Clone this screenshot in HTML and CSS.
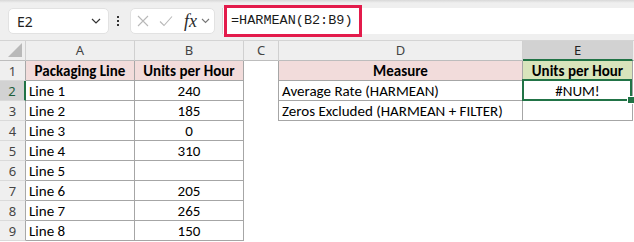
FILE: index.html
```
<!DOCTYPE html>
<html lang="en">
<head>
    <meta charset="UTF-8">
    <title>HARMEAN sheet</title>
    <link rel="stylesheet" href="styles.css">
</head>
<body>
    <div class="toolbar">
        <div class="namebox">
            <span>E2</span>
            <svg class="chev" width="10" height="6" viewBox="0 0 10 6"><path d="M1 1l4 4 4-4" fill="none" stroke="#333" stroke-width="1.2"/></svg>
        </div>
        <div class="dots"><i></i><i></i><i></i></div>
        <div class="fxbox">
            <svg width="12" height="12" viewBox="0 0 12 12"><path d="M1 1l10 10M11 1L1 11" stroke="#b8b8b8" stroke-width="1.1"/></svg>
            <svg width="14" height="12" viewBox="0 0 14 12"><path d="M1 6.5l4 4L13 1.5" fill="none" stroke="#b8b8b8" stroke-width="1.1"/></svg>
            <span class="fx">fx</span>
            <svg class="chev" width="9" height="6" viewBox="0 0 9 6"><path d="M1 1l3.5 3.5L8 1" fill="none" stroke="#777" stroke-width="1.1"/></svg>
        </div>
        <div class="formula">
            <span>=HARMEAN(B2:B9)</span>
            <div class="mark"></div>
        </div>
    </div>

    <div class="sheet">
        <div class="corner"></div>
        <div class="hd">A</div>
        <div class="hd">B</div>
        <div class="hd">C</div>
        <div class="hd">D</div>
        <div class="hd sel">E</div>
        <div class="hd end"></div>

        <div class="rn">1</div>
        <div class="c b th">Packaging Line</div>
        <div class="c b th">Units per Hour</div>
        <div class="c edge"></div>
        <div class="c b th">Measure</div>
        <div class="c b th green">Units per Hour</div>
        <div class="c"></div>

        <div class="rn sel">2</div>
        <div class="c b">Line 1</div>
        <div class="c b num">240</div>
        <div class="c edge"></div>
        <div class="c b">Average Rate (HARMEAN)</div>
        <div class="c b num active">#NUM!</div>
        <div class="c"></div>

        <div class="rn">3</div>
        <div class="c b">Line 2</div>
        <div class="c b num">185</div>
        <div class="c edge"></div>
        <div class="c b">Zeros Excluded (HARMEAN + FILTER)</div>
        <div class="c b"></div>
        <div class="c"></div>

        <div class="rn">4</div>
        <div class="c b">Line 3</div>
        <div class="c b num">0</div>
        <div class="c"></div><div class="c"></div><div class="c"></div><div class="c"></div>

        <div class="rn">5</div>
        <div class="c b">Line 4</div>
        <div class="c b num">310</div>
        <div class="c"></div><div class="c"></div><div class="c"></div><div class="c"></div>

        <div class="rn">6</div>
        <div class="c b">Line 5</div>
        <div class="c b num"></div>
        <div class="c"></div><div class="c"></div><div class="c"></div><div class="c"></div>

        <div class="rn">7</div>
        <div class="c b">Line 6</div>
        <div class="c b num">205</div>
        <div class="c"></div><div class="c"></div><div class="c"></div><div class="c"></div>

        <div class="rn">8</div>
        <div class="c b">Line 7</div>
        <div class="c b num">265</div>
        <div class="c"></div><div class="c"></div><div class="c"></div><div class="c"></div>

        <div class="rn">9</div>
        <div class="c b">Line 8</div>
        <div class="c b num">150</div>
        <div class="c"></div><div class="c"></div><div class="c"></div><div class="c"></div>
    </div>
</body>
</html>
```

FILE: styles.css
```
* {
    box-sizing: border-box;
}
body {
    margin: 0;
    background: #fff;
    font-family: "Carlito", "Lato", sans-serif;
    color: #000;
    width: 634px;
    height: 242px;
    overflow: hidden;
}
.toolbar {
    display: flex;
    align-items: flex-start;
    height: 41px;
    padding-top: 8px;
    background: linear-gradient(#d8d8d8, #efefef 3px);
    border-bottom: 1px solid #d4d4d4;
}
.namebox {
    display: flex;
    align-items: center;
    justify-content: space-between;
    width: 101px;
    height: 26px;
    margin-left: 8px;
    padding: 0 7px 0 8px;
    background: #fff;
    border: 1px solid #e2e2e2;
    border-radius: 5px;
    font-family: "Noto Sans", sans-serif;
    font-size: 14px;
    color: #222;
}
.dots {
    display: flex;
    flex-direction: column;
    gap: 2px;
    width: 21px;
    padding: 8px 0 0 8px;
}
.dots i {
    width: 2px;
    height: 2px;
    background: #333;
}
.fxbox {
    display: flex;
    align-items: center;
    gap: 10px;
    width: 85px;
    height: 26px;
    padding-left: 6px;
    background: #fff;
    border: 1px solid #e2e2e2;
    border-radius: 5px;
}
.fxbox .fx {
    font-family: "Liberation Serif", serif;
    font-style: italic;
    font-size: 18px;
    line-height: 18px;
    color: #2a2a2a;
    margin-left: 1px;
}
.fxbox .chev {
    margin-left: -6px;
}
.formula {
    position: relative;
    flex: 1;
    height: 26px;
    margin-left: 7px;
    padding-left: 8px;
    background: #fff;
    border-left: 1px solid #d6d6d6;
    font-family: "Liberation Mono", monospace;
    font-size: 13.5px;
    line-height: 26px;
    color: #1a1a1a;
}
.mark {
    position: absolute;
    left: 1px;
    top: -3px;
    width: 138px;
    height: 32px;
    border: 3px solid #e31b4b;
}
.sheet {
    display: grid;
    grid-template-columns: 26px 109px 109px 35px 244px 110px 1px;
    grid-auto-rows: 20px;
    font-size: 15px;
}
.corner {
    position: relative;
    background: #efefef;
    border-right: 1px solid #d0d0d0;
    border-bottom: 1px solid #bdbdbd;
}
.corner::after {
    content: "";
    position: absolute;
    right: 3px;
    bottom: 3px;
    border-left: 14px solid transparent;
    border-bottom: 14px solid #b9b9b9;
}
.hd {
    background: #efefef;
    border-right: 1px solid #d0d0d0;
    border-bottom: 1px solid #bdbdbd;
    text-align: center;
    font-family: "Noto Sans", sans-serif;
    font-size: 13px;
    line-height: 19px;
    color: #444;
}
.hd.sel {
    background: #d2d2d2;
    border-bottom: 2px solid #217346;
    color: #222;
}
.hd.end {
    border-right: 0;
}
.rn {
    background: #efefef;
    border-right: 1px solid #a8a8a8;
    border-bottom: 1px solid #dadada;
    text-align: center;
    font-family: "Noto Sans", sans-serif;
    font-size: 13px;
    line-height: 20px;
    color: #444;
}
.rn.sel {
    background: #d2d2d2;
    border-right: 2px solid #217346;
    color: #1d5e3a;
}
.c {
    padding: 0 3px;
    line-height: 20px;
    white-space: nowrap;
}
.b {
    border-right: 1px solid #a6a6a6;
    border-bottom: 1px solid #a6a6a6;
}
.edge {
    border-right: 1px solid #a6a6a6;
}
.th {
    background: #f2dcdb;
    font-weight: bold;
    text-align: center;
}
.th.green {
    background: #d8e4bc;
}
.num {
    text-align: center;
}
.active {
    position: relative;
}
.active::before {
    content: "";
    position: absolute;
    top: -2px;
    left: -1px;
    right: 0;
    bottom: -1px;
    border: 2px solid #217346;
}
.active::after {
    content: "";
    position: absolute;
    right: -3px;
    bottom: -4px;
    width: 6px;
    height: 6px;
    background: #217346;
    border: 1px solid #fff;
}
```
